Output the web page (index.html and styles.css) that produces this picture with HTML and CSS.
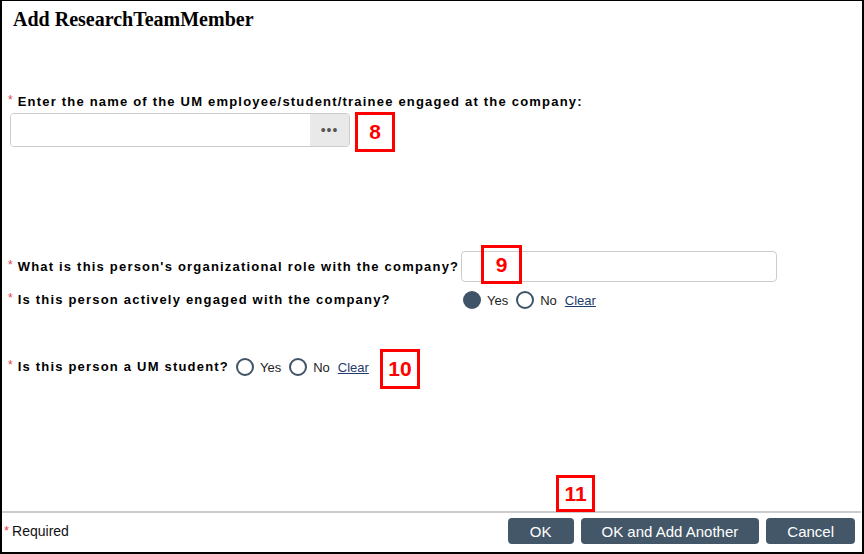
FILE: index.html
```
<!DOCTYPE html>
<html lang="en">
<head>
    <meta charset="UTF-8">
    <title>Add ResearchTeamMember</title>
    <link rel="stylesheet" href="styles.css">
</head>
<body>
    <div class="dialog">
        <h1 class="dialog-title">Add ResearchTeamMember</h1>

        <div class="form">
            <div class="field-person">
                <label class="label"><span class="req">*</span>Enter the name of the UM employee/student/trainee engaged at the company:</label>
                <div class="lookup">
                    <input type="text" class="lookup-input" aria-label="Person">
                    <span class="lookup-btn">&bull;&bull;&bull;</span>
                </div>
            </div>

            <div class="row row-role">
                <label class="label"><span class="req">*</span>What is this person's organizational role with the company?</label>
                <input type="text" class="text-input" aria-label="Role">
            </div>

            <div class="row row-engaged">
                <label class="label"><span class="req">*</span>Is this person actively engaged with the company?</label>
                <div class="radios">
                    <span class="radio checked"></span><span class="opt">Yes</span>
                    <span class="radio"></span><span class="opt">No</span>
                    <a href="#" class="clear">Clear</a>
                </div>
            </div>

            <div class="row-student">
                <label class="label"><span class="req">*</span>Is this person a UM student?</label>
                <div class="radios">
                    <span class="radio"></span><span class="opt">Yes</span>
                    <span class="radio"></span><span class="opt">No</span>
                    <a href="#" class="clear">Clear</a>
                </div>
            </div>
        </div>

        <div class="footer">
            <p class="required"><span class="req">*</span>Required</p>
            <div class="buttons">
                <button class="btn">OK</button>
                <button class="btn">OK and Add Another</button>
                <button class="btn">Cancel</button>
            </div>
        </div>

        <!-- numbered callouts drawn over the form -->
        <span class="callout c8">8</span>
        <span class="callout c9">9</span>
        <span class="callout c10">10</span>
        <span class="callout c11">11</span>
    </div>
</body>
</html>
```

FILE: styles.css
```
* {
    margin: 0;
    padding: 0;
    box-sizing: border-box;
}

body {
    font-family: "Liberation Sans", Arial, sans-serif;
    background: #fff;
}

.dialog {
    position: relative;
    width: 864px;
    height: 554px;
    border: 2px solid #000;
    border-top-width: 1px;
    display: flex;
    flex-direction: column;
}

.dialog-title {
    font-family: "Liberation Serif", "Times New Roman", serif;
    font-size: 20px;
    font-weight: bold;
    line-height: 22px;
    padding: 7px 0 0 11px;
    height: 39px;
    color: #000;
}

.form {
    flex: 1;
    padding-left: 6px;
}

.label {
    font-size: 13px;
    font-weight: bold;
    line-height: 16px;
    letter-spacing: 1.2px;
    color: #000;
}

.req {
    color: #e8423c;
    font-weight: normal;
    font-size: 12px;
    letter-spacing: 0;
    position: relative;
    top: -2px;
    margin-right: 5px;
}

.field-person {
    margin-top: 52px;
}

.lookup {
    display: flex;
    width: 340px;
    height: 34px;
    margin: 3px 0 0 2px;
    border: 1px solid #ccc;
    border-radius: 4px;
    overflow: hidden;
}

.lookup-input {
    flex: 1;
    border: none;
    outline: none;
}

.lookup-btn {
    width: 39px;
    background: #e9e9e9;
    color: #555;
    font-size: 14px;
    letter-spacing: 1px;
    display: flex;
    align-items: center;
    justify-content: center;
}

.row {
    display: grid;
    grid-template-columns: 453px auto;
    align-items: center;
}

.row-role {
    margin-top: 104px;
}

.text-input {
    width: 316px;
    height: 31px;
    border: 1px solid #ccc;
    border-radius: 4px;
}

.row-engaged {
    margin-top: 8px;
    height: 20px;
}

.row-student {
    margin-top: 47px;
    height: 20px;
    display: flex;
    align-items: center;
    gap: 7px;
}

.radios {
    display: flex;
    align-items: center;
    font-size: 13px;
    color: #222;
}

.row-engaged .radios {
    padding-left: 2px;
}

.radio {
    width: 18px;
    height: 18px;
    border: 2px solid #3f5366;
    border-radius: 50%;
    margin-right: 6px;
}

.radio.checked {
    background: #3f5468;
}

.opt {
    margin-right: 8px;
}

.clear {
    color: #1f3c6b;
    text-decoration: underline;
}

.footer {
    height: 41px;
    border-top: 2px solid #ccc;
    margin-right: 1px;
    display: flex;
    justify-content: space-between;
    align-items: flex-start;
    padding: 5px 6px 0 2px;
}

.required {
    font-size: 14px;
    line-height: 26px;
    color: #111;
}

.required .req {
    font-size: 13px;
    top: -1px;
    margin-right: 3px;
}

.buttons {
    display: flex;
    gap: 7px;
}

.btn {
    height: 26px;
    padding: 0 22px;
    background: #435768;
    color: #fff;
    border: none;
    border-radius: 4px;
    font-family: "Liberation Sans", Arial, sans-serif;
    font-size: 15px;
}

.btn + .btn {
    padding: 0 21px;
}

.callout {
    position: absolute;
    border: 3px solid #f00;
    color: #f00;
    font-size: 21px;
    font-weight: bold;
    display: flex;
    align-items: center;
    justify-content: center;
}

.c8 { left: 353px; top: 111px; width: 40px; height: 40px; }
.c9 { left: 479px; top: 244px; width: 41px; height: 39px; }
.c10 { left: 378px; top: 348px; width: 40px; height: 40px; }
.c11 { left: 554px; top: 474px; width: 39px; height: 37px; }
```
